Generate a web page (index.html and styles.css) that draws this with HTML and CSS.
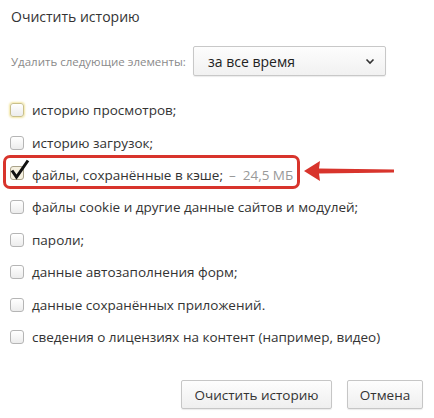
FILE: index.html
```html
<!DOCTYPE html>
<html lang="ru">
<head>
<meta charset="utf-8">
<link rel="stylesheet" href="styles.css">
</head>
<body>
<div class="dialog">
  <h1 class="title">Очистить историю</h1>
  <div class="period">
    <span class="period-label">Удалить следующие элементы:</span>
    <div class="select">
      <span>за все время</span>
      <svg class="chev" width="10" height="7" viewBox="0 0 10 7"><path d="M1.5 1.5 L5 5 L8.5 1.5" fill="none" stroke="#333" stroke-width="1.6"/></svg>
    </div>
  </div>
  <ul class="items">
    <li class="item"><span class="cb focus"></span>историю просмотров;</li>
    <li class="item"><span class="cb"></span>историю загрузок;</li>
    <li class="item"><span class="cb checked"><svg class="tick" width="24" height="24" viewBox="0 0 24 24"><path d="M4 12.5 L8.5 19 L20 2.5" fill="none" stroke="#111" stroke-width="3"/></svg></span>файлы, сохранённые в кэше;<span class="size">–&nbsp; 24,5 МБ</span></li>
    <li class="item"><span class="cb"></span>файлы cookie и другие данные сайтов и модулей;</li>
    <li class="item"><span class="cb"></span>пароли;</li>
    <li class="item"><span class="cb"></span>данные автозаполнения форм;</li>
    <li class="item"><span class="cb"></span>данные сохранённых приложений.</li>
    <li class="item"><span class="cb"></span>сведения о лицензиях на контент (например, видео)</li>
    <li class="highlight"></li>
    <li class="arrow"><svg width="92" height="24" viewBox="0 0 92 24"><path d="M0 12 L16 2 L15 9.5 L90 10.5 L90 13.5 L15 14.5 L16 22 Z" fill="#d8342c"/></svg></li>
  </ul>
  <div class="buttons">
    <button class="btn btn-main">Очистить историю</button>
    <button class="btn btn-cancel">Отмена</button>
  </div>
</div>
</body>
</html>
```
FILE: styles.css
```css
html, body {
  margin: 0;
  padding: 0;
  background: #fff;
}
.dialog {
  width: 434px;
  height: 418px;
  box-sizing: border-box;
  padding: 7px 11px 0 11px;
  font-family: "Open Sans", "Noto Sans", sans-serif;
  color: #333;
}
.title {
  margin: 0;
  font-size: 14px;
  font-weight: normal;
  line-height: 20px;
  color: #333;
}
.period {
  display: flex;
  align-items: center;
  margin-top: 19px;
  height: 30px;
}
.period-label {
  flex: none;
  white-space: nowrap;
  font-size: 11.5px;
  color: #8a8a8a;
  width: 182px;
}
.select {
  display: flex;
  align-items: center;
  justify-content: space-between;
  box-sizing: border-box;
  width: 193px;
  height: 30px;
  padding: 0 10px 0 14px;
  border: 1px solid #c8c8c8;
  border-radius: 2px;
  background: linear-gradient(#fdfdfd, #f1f1f1);
  box-shadow: 0 1px 1px rgba(0,0,0,0.08);
  font-size: 14px;
  color: #222;
}
.chev { display: block; }
.items {
  position: relative;
  list-style: none;
  margin: 18px 0 0 0;
  padding: 0;
}
.item {
  display: flex;
  align-items: center;
  height: 32.4px;
  font-size: 13.5px;
  color: #333;
  white-space: nowrap;
}
.cb {
  position: relative;
  width: 14px;
  height: 14px;
  flex: none;
  box-sizing: border-box;
  margin: 0 8px 0 -1px;
  border: 1px solid #b5b5b5;
  border-radius: 3px;
  background: linear-gradient(#ffffff, #ececec);
}
.cb.focus {
  box-shadow: 0 0 2px 1px #f3e7a6;
  border-color: #c9c08c;
}
.cb.checked {
  margin-top: -4px;
  background: #f5f0e0;
  border-color: #a9a28a;
}
.tick {
  position: absolute;
  left: -3px;
  top: -9px;
}
.size {
  color: #999;
  margin-left: 6px;
}
.highlight {
  position: absolute;
  left: -8px;
  top: 61px;
  width: 297px;
  height: 34px;
  box-sizing: border-box;
  border: 3.5px solid #d8342c;
  border-radius: 7px;
}
.arrow {
  position: absolute;
  left: 293px;
  top: 65px;
}
.arrow svg { display: block; }
.buttons {
  display: flex;
  justify-content: flex-end;
  gap: 15px;
  margin-top: 27px;
}
.btn {
  height: 29px;
  box-sizing: border-box;
  padding: 0;
  white-space: nowrap;
  border: 1px solid #c6c6c6;
  border-radius: 2px;
  background: linear-gradient(#fdfdfd, #efefef);
  box-shadow: 0 1px 1px rgba(0,0,0,0.08);
  font-family: "Open Sans", "Noto Sans", sans-serif;
  font-size: 13.5px;
  color: #333;
}
.btn-main { width: 151px; }
.btn-cancel { width: 76px; }
```
